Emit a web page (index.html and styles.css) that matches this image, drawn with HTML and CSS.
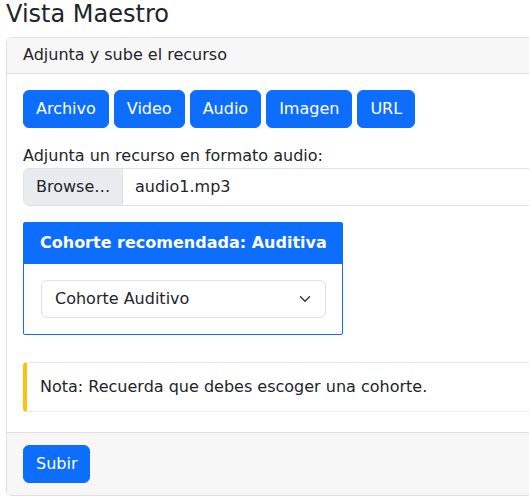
FILE: index.html
```html
<!DOCTYPE html>
<html lang="es">
<head>
<meta charset="utf-8">
<title>Vista Maestro</title>
<link rel="stylesheet" href="styles.css">
</head>
<body>
<div class="page">
  <h1 class="title">Vista Maestro</h1>
  <div class="card main-card">
    <div class="card-header">Adjunta y sube el recurso</div>
    <div class="card-body">
      <div class="btn-row">
        <button class="btn">Archivo</button>
        <button class="btn">Video</button>
        <button class="btn">Audio</button>
        <button class="btn">Imagen</button>
        <button class="btn">URL</button>
      </div>
      <label class="label">Adjunta un recurso en formato audio:</label>
      <div class="input-group">
        <span class="browse">Browse…</span>
        <span class="file-name">audio1.mp3</span>
      </div>
      <div class="card cohort-card">
        <div class="cohort-header">Cohorte recomendada: Auditiva</div>
        <div class="cohort-body">
          <div class="select">
            <span>Cohorte Auditivo</span>
            <svg class="chevron" width="16" height="12" viewBox="0 0 16 16"><path d="m2 5 6 6 6-6" fill="none" stroke="#343a40" stroke-width="2" stroke-linecap="round" stroke-linejoin="round"/></svg>
          </div>
        </div>
      </div>
      <div class="callout">Nota: Recuerda que debes escoger una cohorte.</div>
    </div>
    <div class="card-footer">
      <button class="btn">Subir</button>
    </div>
  </div>
</div>
</body>
</html>
```

FILE: styles.css
```css
html, body {
  margin: 0;
  padding: 0;
  overflow: hidden;
}
body {
  font-family: "DejaVu Sans", sans-serif;
  font-size: 16px;
  line-height: 1.5;
  color: #212529;
  background: #fff;
}
.page {
  padding: 0 6px;
  width: 640px;
}
.title {
  font-size: 24px;
  font-weight: 500;
  line-height: 1.2;
  margin: 0 0 8px 0;
}
.card {
  border: 1px solid #dfdfdf;
  border-radius: 6px;
  background: #fff;
}
.main-card {
  width: 620px;
}
.card-header {
  padding: 5px 16px 6px 16px;
  background: #f7f7f7;
  border-bottom: 1px solid #dfdfdf;
  border-radius: 5px 5px 0 0;
}
.card-body {
  padding: 16px 16px 20px 16px;
}
.btn-row {
  display: flex;
  gap: 5px;
  margin-bottom: 16px;
}
.btn {
  font-family: inherit;
  font-size: 16px;
  line-height: 24px;
  padding: 6px 12px;
  color: #fff;
  background: #0d6efd;
  border: 1px solid #0d6efd;
  border-radius: 6px;
}
.label {
  display: block;
}
.input-group {
  display: flex;
  border: 1px solid #dee2e6;
  border-radius: 6px;
  overflow: hidden;
  margin-bottom: 16px;
}
.browse {
  padding: 6px 12px;
  background: #e9ecef;
  border-right: 1px solid #dee2e6;
  width: 74px;
}
.file-name {
  padding: 6px 12px;
}
.cohort-card {
  width: 318px;
  border-color: #0d6efd;
  border-radius: 2px;
  margin-bottom: 27px;
}
.cohort-header {
  background: #0d6efd;
  color: #fff;
  font-weight: 700;
  padding: 8px 16px 9px 16px;
  white-space: nowrap;
}
.cohort-body {
  padding: 16px;
}
.select {
  display: flex;
  align-items: center;
  justify-content: space-between;
  border: 1px solid #dee2e6;
  border-radius: 6px;
  padding: 6px 12px 6px 13px;
  margin-left: 1px;
}
.chevron {
  display: block;
}
.callout {
  border: 1px solid #e9ecef;
  border-left: 4px solid #ffc107;
  border-radius: 4px;
  padding: 12px 13px;
}
.card-footer {
  padding: 12px 16px;
  background: #f7f7f7;
  border-top: 1px solid #dfdfdf;
  border-radius: 0 0 5px 5px;
}
```
